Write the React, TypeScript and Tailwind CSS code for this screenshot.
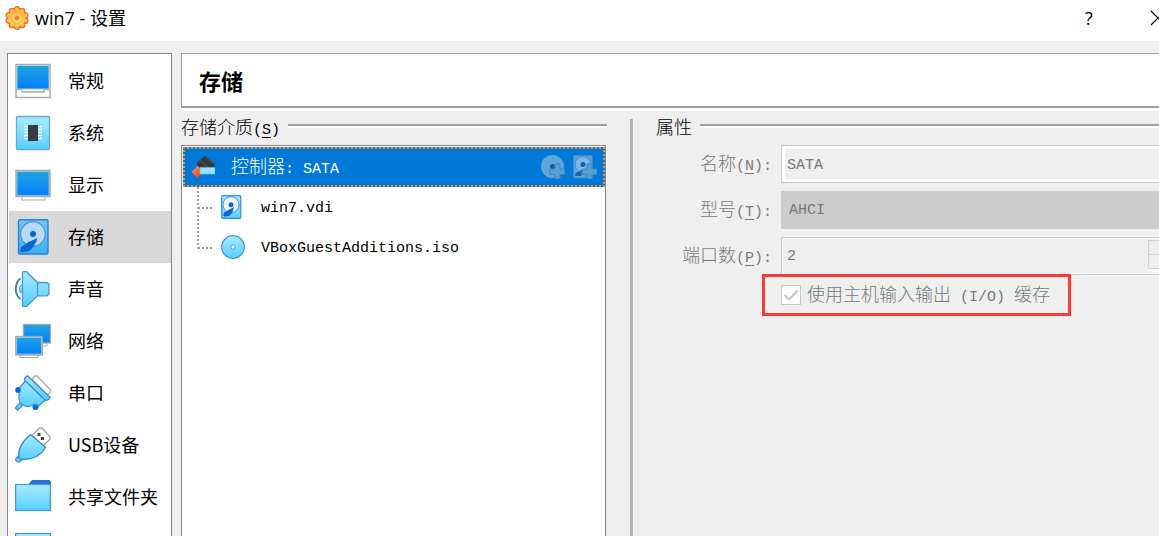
import { useState } from "react";
import type { ReactNode } from "react";

const uiFont = "font-['Noto_Sans_CJK_SC',sans-serif]";
const titleFont = "font-['Open_Sans','Noto_Sans_CJK_SC',sans-serif]";
const formFont = "font-['Liberation_Mono','Noto_Sans_CJK_SC',monospace]";

function Gradients() {
  return (
    <svg className="absolute h-0 w-0" aria-hidden="true">
      <defs>
        <linearGradient id="screen" x1="0" y1="0" x2="0" y2="1">
          <stop offset="0" stopColor="#21a3e0" />
          <stop offset="1" stopColor="#0080fa" />
        </linearGradient>
        <linearGradient id="sky" x1="0" y1="0" x2="0" y2="1">
          <stop offset="0" stopColor="#a8ebff" />
          <stop offset="1" stopColor="#55cfff" />
        </linearGradient>
        <linearGradient id="disk" x1="0" y1="0" x2="0" y2="1">
          <stop offset="0" stopColor="#74c8f0" />
          <stop offset="1" stopColor="#39b0ef" />
        </linearGradient>
        <linearGradient id="gear" x1="0" y1="0" x2="0" y2="1">
          <stop offset="0" stopColor="#ffb94c" />
          <stop offset="1" stopColor="#ffd65a" />
        </linearGradient>
        <linearGradient id="red" x1="0" y1="0" x2="1" y2="1">
          <stop offset="0" stopColor="#ff9a70" />
          <stop offset="1" stopColor="#d8300a" />
        </linearGradient>
      </defs>
    </svg>
  );
}

function Icon({ children }: { children: ReactNode }) {
  return (
    <svg viewBox="0 0 36 36" className="h-9 w-9 shrink-0" aria-hidden="true">
      {children}
    </svg>
  );
}

function GeneralIcon() {
  return (
    <Icon>
      <rect x="1" y="1.5" width="34" height="33" fill="#fff" stroke="#aaa" strokeWidth="1.5" />
      <rect x="2" y="2.5" width="32" height="23.5" fill="url(#screen)" stroke="#b5d5ec" strokeWidth="0.8" />
      <path d="M1 26.5H7V29H29V26.5H35" fill="none" stroke="#aaa" strokeWidth="1.3" />
    </Icon>
  );
}

function SystemIcon() {
  return (
    <Icon>
      <rect x="1.5" y="1.5" width="33" height="33" rx="1" fill="url(#sky)" stroke="#6aa6df" strokeWidth="1.3" />
      <path d="M9 11.5H27M9 14.5H27M9 17.5H27M9 20.5H27M9 23.5H27" stroke="#fff" strokeWidth="1.5" />
      <rect x="13" y="10" width="10" height="16" fill="#343b46" />
    </Icon>
  );
}

function DisplayIcon() {
  return (
    <Icon>
      <rect x="7" y="29" width="23" height="4" fill="#fff" stroke="#aaa" />
      <rect x="1" y="3.5" width="34" height="26" fill="url(#screen)" stroke="#a8a8a8" strokeWidth="1.4" />
      <rect x="2" y="4.5" width="32" height="24" fill="none" stroke="#b5d5ec" strokeWidth="0.7" />
    </Icon>
  );
}

function StorageIcon() {
  return (
    <Icon>
      <rect x="3.5" y="0.8" width="29.5" height="34.2" rx="1.5" fill="url(#disk)" stroke="#2383dc" strokeWidth="1.4" />
      <circle cx="18" cy="15" r="12.3" fill="#bcdaf5" stroke="#4a91dc" strokeWidth="1.2" />
      <path d="M22.5 19Q14 22 7 27.500Q4.500 30 5.500 33L13 32.800Q20 28 22.500 19Z" fill="#0767d2" />
      <circle cx="18" cy="15" r="3" fill="#0767d2" />
    </Icon>
  );
}

function AudioIcon() {
  return (
    <Icon>
      <path d="M5.5 7.5Q0.8 11 0.8 18T5.5 28" fill="none" stroke="#3179ca" strokeWidth="1.8" />
      <path d="M8 13Q4.300 14 4.300 18T8 22.500Z" fill="url(#sky)" stroke="#4b95d8" />
      <path d="M7.500 1.500Q7.500 0.700 8.300 0.700H11Q12 0.700 12.500 1.800L22.500 11.500H32L34 13V23L32 24.800H22.500L12.500 34.500Q12 35.400 11 35.400H8.300Q7.500 35.400 7.500 34.500Z" fill="url(#sky)" stroke="#4b95d8" strokeWidth="1.3" />
      <path d="M22.500 11.500V24.800" stroke="#4b95d8" strokeWidth="1.3" />
    </Icon>
  );
}

function NetworkIcon() {
  return (
    <Icon>
      <path d="M18 20H32V23H18Z" fill="#fff" stroke="#aaa" />
      <rect x="8.500" y="1.500" width="27" height="18.500" fill="url(#screen)" stroke="#a8a8a8" strokeWidth="1.3" />
      <rect x="5" y="31" width="18" height="3.500" fill="#fff" stroke="#aaa" />
      <rect x="0.800" y="13.500" width="26.500" height="18.500" fill="url(#screen)" stroke="#a8a8a8" strokeWidth="1.3" />
      <rect x="1.800" y="14.500" width="24.500" height="16.500" fill="none" stroke="#c4e0f4" strokeWidth="0.6" />
    </Icon>
  );
}

function SerialIcon() {
  return (
    <Icon>
      <path d="M17 4.500L19.500 1H22L35.200 14.500V17.500L32 20Z" fill="#fff" stroke="#aaa" strokeWidth="1.3" />
      <circle cx="3.200" cy="15" r="3" fill="#0767d2" />
      <circle cx="20.500" cy="32" r="3" fill="#0767d2" />
      <path d="M1 34.500L7 28.500" stroke="#3c89d5" strokeWidth="4.500" />
      <path d="M2 33.500L8 27.500" stroke="#66d3ff" strokeWidth="2" />
      <path d="M11 5.500L4.500 12.500Q6.500 14.500 4.500 18Q2.500 25 6.500 29Q11.500 33 17 30.500Q21 28.500 23.500 31L30.500 25Z" fill="url(#sky)" stroke="#3c89d5" strokeWidth="1.2" />
      <path d="M12.500 0.800Q9.500 2 9.500 5L30.500 25.500Q33.500 25.500 35.200 22.500Z" fill="url(#sky)" stroke="#3c89d5" strokeWidth="1.3" strokeLinejoin="round" />
    </Icon>
  );
}

function UsbIcon() {
  return (
    <Icon>
      <path d="M17 8.500L24.500 1L27 1L35.200 10V12L28 19Z" fill="#fff" stroke="#a6a6a6" strokeWidth="1.3" />
      <rect x="22.500" y="6" width="3" height="3" fill="#444" />
      <rect x="26" y="10" width="3" height="3" fill="#444" />
      <path d="M1 31.500L4 28.500L8 32L4.500 35H2.500L0.800 33.500Z" fill="#66d3ff" stroke="#3c89d5" strokeWidth="1.2" />
      <path d="M15.500 7.500L30.500 20.500Q24 32 9 32.500Q5 32.500 3.800 31Q2 19 15.500 7.500Z" fill="url(#sky)" stroke="#3c89d5" strokeWidth="1.3" />
    </Icon>
  );
}

function FolderIcon() {
  return (
    <Icon>
      <path d="M13 6L17 1H34.500L36 3V7Z" fill="#2474d2" />
      <rect x="0.600" y="5.500" width="34.800" height="26" fill="url(#sky)" stroke="#4b95d8" strokeWidth="1.2" />
    </Icon>
  );
}

function InterfaceIcon() {
  return (
    <Icon>
      <rect x="0.600" y="2.500" width="34.800" height="30" fill="url(#sky)" stroke="#4b95d8" strokeWidth="1.2" />
    </Icon>
  );
}

function GearIcon() {
  const teeth = Array.from({ length: 10 }, (_, i) => {
    const angle = ((i + 0.5) * Math.PI) / 5;
    return { x: 12 + 8.6 * Math.cos(angle), y: 12 + 8.6 * Math.sin(angle) };
  });

  return (
    <svg viewBox="0 0 24 24" className="h-6 w-6 shrink-0" aria-hidden="true">
      {teeth.map((tooth, i) => (
        <circle key={i} cx={tooth.x} cy={tooth.y} r="2.7" fill="#ffb648" stroke="#ee7322" strokeWidth="1.3" />
      ))}
      <circle cx="12" cy="12" r="8.6" fill="url(#gear)" />
      <circle cx="12" cy="12" r="6" fill="none" stroke="#f9a03c" strokeWidth="0.8" />
      <circle cx="12" cy="12" r="1.8" fill="#f08030" stroke="#b98052" strokeWidth="0.8" />
    </svg>
  );
}

function ControllerIcon() {
  return (
    <svg viewBox="0 0 24 24" className="h-6 w-6 shrink-0" aria-hidden="true">
      <path d="M0.500 17L7 10.500L12 17L6.500 23.500Z" fill="url(#red)" />
      <path d="M6 8L14 0.500L24 9V13H9L6 10Z" fill="#383838" />
      <path d="M9 5.500L18 13M14 1L24 10" stroke="#666" strokeWidth="0.7" />
      <rect x="9" y="12.500" width="15" height="6.500" fill="#94e4ff" stroke="#55c9f8" strokeWidth="0.7" />
    </svg>
  );
}

function HardDiskIcon() {
  return (
    <svg viewBox="0 0 24 24" className="h-6 w-6 shrink-0" aria-hidden="true">
      <rect x="0.700" y="0.700" width="19" height="22.600" rx="1" fill="url(#sky)" stroke="#358dd9" strokeWidth="1.2" />
      <circle cx="10" cy="9.700" r="8" fill="#eef8ff" stroke="#4595df" />
      <path d="M13 12Q8 14.500 3.500 17.500Q1.500 20 3 21.500L8 21Q12 18 13 12Z" fill="#1267cf" />
      <circle cx="10" cy="9.700" r="2.500" fill="#1267cf" />
    </svg>
  );
}

function DiscIcon() {
  return (
    <svg viewBox="0 0 24 24" className="h-6 w-6 shrink-0" aria-hidden="true">
      <circle cx="12" cy="12" r="11.300" fill="url(#sky)" stroke="#4594d8" strokeWidth="1.2" />
      <circle cx="12" cy="12" r="2.200" fill="#fff" stroke="#4594d8" />
    </svg>
  );
}

function AddOpticalIcon() {
  return (
    <svg viewBox="0 0 24 24" className="h-6 w-6" aria-hidden="true">
      <circle cx="11.500" cy="11.500" r="11.500" fill="#5fa5d8" />
      <circle cx="11.500" cy="11.500" r="2.500" fill="#0e5ba3" />
      <path d="M14 9H19V14H24V19.500H19V24H14V19.500H9V14H14Z" fill="#579fcd" stroke="#3987c4" />
    </svg>
  );
}

function AddDiskIcon() {
  return (
    <svg viewBox="0 0 24 24" className="h-6 w-6" aria-hidden="true">
      <rect x="0.500" y="0.500" width="19" height="22.500" rx="1" fill="#5aa2d8" stroke="#3a8acd" />
      <circle cx="10" cy="9.500" r="8" fill="#7cb7e5" stroke="#4690cc" />
      <circle cx="10" cy="9.500" r="2.500" fill="#1761a5" />
      <path d="M10 14L3 18L2 21H8Z" fill="#1761a5" />
      <path d="M14 9H19V14H24V19.500H19V24H14V19.500H9V14H14Z" fill="#579fcd" stroke="#3987c4" />
    </svg>
  );
}

const categories = [
  { name: "常规", icon: <GeneralIcon /> },
  { name: "系统", icon: <SystemIcon /> },
  { name: "显示", icon: <DisplayIcon /> },
  { name: "存储", icon: <StorageIcon /> },
  { name: "声音", icon: <AudioIcon /> },
  { name: "网络", icon: <NetworkIcon /> },
  { name: "串口", icon: <SerialIcon /> },
  { name: "USB设备", icon: <UsbIcon /> },
  { name: "共享文件夹", icon: <FolderIcon /> },
];

const media = [
  { name: "win7.vdi", icon: <HardDiskIcon /> },
  { name: "VBoxGuestAdditions.iso", icon: <DiscIcon /> },
];

// Chinese glyphs are two latin cells wide in the form font.
function Cjk({ children }: { children: ReactNode }) {
  return <span className="text-lg leading-6 font-light">{children}</span>;
}

function Mnemonic({ letter }: { letter: string }) {
  return (
    <>
      (<span className="underline underline-offset-3">{letter}</span>)
    </>
  );
}

function GroupTitle({ children }: { children: ReactNode }) {
  return (
    <div className="flex h-6 items-center gap-2">
      <h2 className="shrink-0 pt-1 whitespace-nowrap">{children}</h2>
      <div className="mb-1 h-1 grow border-t-2 border-[#a0a0a0] bg-white" />
    </div>
  );
}

function FieldLabel({ id, text, letter }: { id: string; text: string; letter: string }) {
  return (
    <label htmlFor={id} className="pt-[3px] text-right whitespace-nowrap">
      <Cjk>{text}</Cjk>
      <Mnemonic letter={letter} />:
    </label>
  );
}

export default function App() {
  const [selected, setSelected] = useState("存储");

  return (
    <div className={`flex h-screen flex-col overflow-hidden bg-[#efefef] text-black ${uiFont}`}>
      <Gradients />
      <header className={`flex h-[41px] shrink-0 items-center bg-white pb-[6px] pl-[5px] ${titleFont}`}>
        <GearIcon />
        <h1 className="ml-[6px] grow text-lg">win7 - 设置</h1>
        <button type="button" aria-label="帮助" className="w-10 text-lg">
          ?
        </button>
        <button type="button" aria-label="关闭" className="-mr-3 ml-[38px] h-6 w-6">
          <svg viewBox="0 0 24 24" className="h-6 w-6" aria-hidden="true">
            <path d="M4 5L18 19M18 5L4 19" stroke="#000" strokeWidth="1.2" />
          </svg>
        </button>
      </header>

      <div className="flex min-h-0 grow gap-[9px] pt-3 pl-[7px]">
        <nav className="w-[165px] shrink-0 overflow-hidden border border-b-0 border-[#828790] bg-white pt-px pl-px">
          {categories.map((category) => (
            <button
              key={category.name}
              type="button"
              onClick={() => setSelected(category.name)}
              className={`flex h-13 w-full items-center gap-[17px] pl-[6px] text-lg whitespace-nowrap ${
                category.name === selected ? "bg-[#d9d9d9]" : ""
              }`}
            >
              {category.icon}
              <span className="pb-[3px]">{category.name}</span>
            </button>
          ))}
          <button type="button" aria-label="用户界面" className="flex h-13 w-full items-center pl-[6px]">
            <InterfaceIcon />
          </button>
        </nav>

        <main className={`-mr-5 flex min-w-0 grow flex-col text-[15px] ${formFont}`}>
          <div className="shrink-0 border-b-3 border-white">
            <div className="flex h-[55px] items-center border border-b-2 border-[#a0a0a0] bg-white pl-[17px]">
              <h2 className={`text-[22px] leading-8 font-bold ${uiFont}`}>{selected}</h2>
            </div>
          </div>

          <div className="flex min-h-0 grow">
            <section className="flex w-[426px] shrink-0 flex-col pt-[5px]">
              <GroupTitle>
                <Cjk>存储介质</Cjk>
                <Mnemonic letter="S" />
              </GroupTitle>
              <div className="mt-[5px] mr-px grow border border-b-0 border-[#828790] bg-white pt-px pl-px">
                <div className="flex h-10 items-center border-2 border-dotted border-[#ff8728] bg-[#0078d7] px-[6px] text-white">
                  <ControllerIcon />
                  <span className="ml-4 grow pt-1">
                    <Cjk>控制器</Cjk>: SATA
                  </span>
                  <div className="flex gap-2">
                    <button type="button" aria-label="添加虚拟光驱">
                      <AddOpticalIcon />
                    </button>
                    <button type="button" aria-label="添加虚拟硬盘">
                      <AddDiskIcon />
                    </button>
                  </div>
                </div>
                <ul>
                  {media.map((medium, index) => (
                    <li key={medium.name} className="flex h-10 items-center pl-[14px]">
                      <svg viewBox="0 0 16 40" className="mr-2 h-10 w-4" aria-hidden="true">
                        <path
                          d={index === media.length - 1 ? "M1 0V22M1 21H15" : "M1 0V40M1 21H15"}
                          stroke="#a0a0a0"
                          strokeWidth="2"
                          strokeDasharray="2 2"
                          fill="none"
                        />
                      </svg>
                      {medium.icon}
                      <span className="ml-4 pt-1">{medium.name}</span>
                    </li>
                  ))}
                </ul>
              </div>
            </section>

            <div className="mt-2 ml-[23px] w-1 shrink-0 border-r border-l-3 border-r-[#f8f8f8] border-l-[#b4b4b4]" />

            <section className="min-w-0 grow pt-[5px] pl-[22px]">
              <GroupTitle>
                <Cjk>属性</Cjk>
              </GroupTitle>

              <div className="mt-[5px] grid grid-cols-[116px_1fr] items-center gap-x-[9px] gap-y-2 text-[#787878]">
                <FieldLabel id="name" text="名称" letter="N" />
                <input
                  id="name"
                  type="text"
                  defaultValue="SATA"
                  disabled
                  className="h-[38px] w-full border border-[#c8c8c8] bg-[#efefef] px-[5px] pt-[3px] ring-3 ring-white ring-inset"
                />

                <FieldLabel id="type" text="型号" letter="T" />
                <select id="type" disabled className="h-[38px] w-full appearance-none bg-[#cccccc] px-2 pt-[3px] opacity-100">
                  <option>AHCI</option>
                </select>

                <FieldLabel id="ports" text="端口数" letter="P" />
                <div className="flex h-[38px] border border-[#c8c8c8] p-px ring-1 ring-white ring-inset">
                  <input
                    id="ports"
                    type="text"
                    inputMode="numeric"
                    defaultValue="2"
                    disabled
                    className="min-w-0 grow px-1 pt-[3px]"
                  />
                  <div className="my-px flex w-[29px] flex-col bg-white pb-[3px]">
                    <button type="button" disabled aria-label="增加" className="flex grow items-center justify-center border border-[#d2d2d2] bg-[#efefef]">
                      <svg viewBox="0 0 8 4" className="h-1 w-2">
                        <path d="M0 4L4 0L8 4Z" fill="#555" />
                      </svg>
                    </button>
                    <button type="button" disabled aria-label="减少" className="-mt-px flex grow items-center justify-center border border-[#d2d2d2] bg-[#efefef]">
                      <svg viewBox="0 0 8 4" className="h-1 w-2">
                        <path d="M0 0L4 4L8 0Z" fill="#555" />
                      </svg>
                    </button>
                  </div>
                </div>
              </div>

              <label className="relative -mt-px ml-[106px] flex h-[42px] w-[309px] items-center border-3 border-[#fa3938] pl-4 whitespace-nowrap text-[#787878]">
                <input
                  type="checkbox"
                  defaultChecked
                  disabled
                  className="peer h-5 w-5 shrink-0 appearance-none border border-[#c8c8c8] bg-white"
                />
                <svg viewBox="0 0 20 20" className="-ml-5 hidden h-5 w-5 shrink-0 peer-checked:block" aria-hidden="true">
                  <path d="M3.500 10L8 14.500L16.500 5.500" fill="none" stroke="#c8c8c8" strokeWidth="2" />
                </svg>
                <span className="ml-[6px] pt-1 whitespace-pre">
                  <Cjk>使用主机输入输出</Cjk> (I/O) <Cjk>缓存</Cjk>
                </span>
              </label>
            </section>
          </div>
        </main>
      </div>
    </div>
  );
}
